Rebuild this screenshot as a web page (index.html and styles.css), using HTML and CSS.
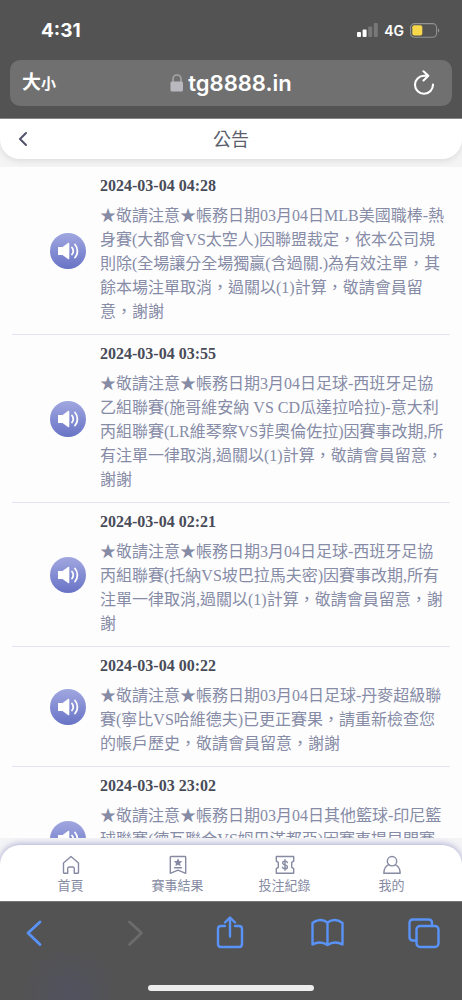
FILE: index.html
```html
<!DOCTYPE html>
<html lang="zh-Hant">
<head>
<meta charset="utf-8">
<meta name="viewport" content="width=device-width, initial-scale=1">
<title>公告</title>
<link rel="stylesheet" href="styles.css">
</head>
<body>
<svg class="defs" width="0" height="0" aria-hidden="true">
  <symbol id="speaker" viewBox="0 0 36 36">
    <path d="M8 14h4.500l5.500-4c.8-.5 1.300-.3 1.300.5v15c0 .8-.5 1-1.300.5L12.500 22H8z" fill="#fff"/>
    <path d="M22 14.500c1.500 2 1.500 5 0 7M25 11.500c3.200 3.700 3.200 9.300 0 13" fill="none" stroke="#fff" stroke-width="1.800" stroke-linecap="round"/>
  </symbol>
</svg>
<div class="phone">
  <div class="browser-top">
    <div class="status">
      <span class="clock">4:31</span>
      <div class="signals">
        <svg width="21" height="14" viewBox="0 0 21 14" aria-hidden="true"><rect x="0" y="9" width="4" height="5" rx="1" fill="#fff"/><rect x="5.600" y="6.500" width="4" height="7.500" rx="1" fill="#fff"/><rect x="11.200" y="3.500" width="4" height="10.500" rx="1" fill="#777"/><rect x="16.800" y="0" width="4" height="14" rx="1" fill="#777"/></svg>
        <span class="network">4G</span>
        <svg width="30" height="15" viewBox="0 0 30 15" aria-hidden="true"><rect x=".6" y=".6" width="26" height="13.600" rx="4" fill="none" stroke="#929292" stroke-width="1.100"/><rect x="2.300" y="2.300" width="10" height="10.200" rx="2" fill="#f8d84a"/><path d="M28 5.200c1.800.8 1.800 3.600 0 4.400z" fill="#929292"/></svg>
      </div>
    </div>
    <div class="address">
      <button class="text-size" type="button"><span class="big">大</span><span class="small">小</span></button>
      <div class="site">
        <svg width="14" height="18" viewBox="0 0 14 18" aria-hidden="true"><path d="M3 8V5a4 4 0 0 1 8 0v3" fill="none" stroke="#a5a5a9" stroke-width="1.600"/><rect x=".5" y="7.500" width="12.500" height="10" rx="1.500" fill="#b9b8bf"/></svg>
        <span>tg8888.in</span>
      </div>
      <button class="reload" type="button" aria-label="重新整理"><svg width="22" height="26" viewBox="0 0 22 26" aria-hidden="true"><path d="M14.500 5.800H11A9 9 0 1 0 20 14.500M10.500 1.300l4.800 4.500-4.800 4.700" fill="none" stroke="#fff" stroke-width="2.100" stroke-linecap="round" stroke-linejoin="round"/></svg></button>
    </div>
  </div>
  <header class="page-head">
    <div class="head-card">
      <button class="back" type="button" aria-label="返回"><svg width="10" height="16" viewBox="0 0 10 16" aria-hidden="true"><path d="M8 2L2 8l6 6" fill="none" stroke="#50546a" stroke-width="2" stroke-linecap="round" stroke-linejoin="round"/></svg></button>
      <h1>公告</h1>
    </div>
  </header>
  <main class="notices">
    <article class="notice">
      <span class="badge"><svg width="36" height="36"><use href="#speaker"/></svg></span>
      <div class="body"><h2>2024-03-04 04:28</h2><p>★敬請注意★帳務日期03月04日MLB美國職棒-熱身賽(大都會VS太空人)因聯盟裁定，依本公司規則除(全場讓分全場獨贏(含過關.)為有效注單，其餘本場注單取消，過關以(1)計算，敬請會員留意，謝謝</p></div>
    </article>
    <article class="notice">
      <span class="badge"><svg width="36" height="36"><use href="#speaker"/></svg></span>
      <div class="body"><h2>2024-03-04 03:55</h2><p>★敬請注意★帳務日期3月04日足球-西班牙足協乙組聯賽(施哥維安納 VS CD瓜達拉哈拉)-意大利丙組聯賽(LR維琴察VS菲奧倫佐拉)因賽事改期,所有注單一律取消,過關以(1)計算，敬請會員留意，謝謝</p></div>
    </article>
    <article class="notice">
      <span class="badge"><svg width="36" height="36"><use href="#speaker"/></svg></span>
      <div class="body"><h2>2024-03-04 02:21</h2><p>★敬請注意★帳務日期3月04日足球-西班牙足協丙組聯賽(托納VS坡巴拉馬夫密)因賽事改期,所有注單一律取消,過關以(1)計算，敬請會員留意，謝謝</p></div>
    </article>
    <article class="notice">
      <span class="badge"><svg width="36" height="36"><use href="#speaker"/></svg></span>
      <div class="body"><h2>2024-03-04 00:22</h2><p>★敬請注意★帳務日期03月04日足球-丹麥超級聯賽(寧比VS哈維德夫)已更正賽果，請重新檢查您的帳戶歷史，敬請會員留意，謝謝</p></div>
    </article>
    <article class="notice tall">
      <span class="badge"><svg width="36" height="36"><use href="#speaker"/></svg></span>
      <div class="body"><h2>2024-03-03 23:02</h2><p>★敬請注意★帳務日期03月04日其他籃球-印尼籃球聯賽(德瓦聯合VS姆巴滿都亞)因賽事提早開賽</p></div>
    </article>
  </main>
  <div class="tab-wrap">
    <nav class="tabs">
      <a href="#home"><svg width="20" height="20" viewBox="0 0 20 20" aria-hidden="true"><path d="M2.500 8L10 1.500 17.500 8v9.500q0 .8-.8.800h-3.400v-4.600q0-1.700-1.700-1.700H8.400q-1.700 0-1.700 1.700v4.600H3.300q-.8 0-.8-.8z"/></svg><span>首頁</span></a>
      <a href="#results"><svg width="20" height="20" viewBox="0 0 20 20" aria-hidden="true"><path d="M3 1.500h14q.7 0 .7.700v16.100L10 15.200l-7.700 3.100V2.200q0-.7.700-.7zM6.500 12.700h7"/><path class="solid" d="M10 3.300l1.300 2.600 2.900.4-2.100 2 .5 2.900-2.600-1.400-2.600 1.400.5-2.900-2.100-2 2.900-.4z"/></svg><span>賽事結果</span></a>
      <a href="#bets"><svg width="20" height="20" viewBox="0 0 20 20" aria-hidden="true"><path d="M1.300 1.500h17.400v4.700l-2 1.200v5l2 1.200v4.700H1.300v-4.700l2-1.200v-5l-2-1.200z"/><path d="M12.400 7.600c-.2-1-1.100-1.500-2.400-1.500-3 0-3.100 3.200 0 3.800 3.300.7 3.100 3.900 0 3.900-1.400 0-2.300-.5-2.500-1.700M10 4.600v10.700"/></svg><span>投注紀錄</span></a>
      <a href="#me"><svg width="20" height="20" viewBox="0 0 20 20" aria-hidden="true"><circle cx="10" cy="6.200" r="4.700"/><path d="M6.800 9.700c-3 1.300-5 4.300-5 8.600h16.400c0-4.300-2-7.300-5-8.600"/></svg><span>我的</span></a>
    </nav>
  </div>
  <div class="browser-bottom">
    <div class="tools">
      <button type="button" aria-label="上一頁"><svg width="34" height="34" viewBox="0 0 34 34"><path d="M23 6L11 17l12 11.500" stroke-width="2.800"/></svg></button>
      <button type="button" aria-label="下一頁" disabled><svg width="34" height="34" viewBox="0 0 34 34"><path d="M14.500 6l12 11-12 11.500" stroke-width="2.800"/></svg></button>
      <button type="button" aria-label="分享"><svg width="34" height="34" viewBox="0 0 34 34"><path d="M13 10H9Q6 10 6 13v15q0 3 3 3h18q3 0 3-3V13q0-3-3-3h-4M18 20.500V2M13 6.500l5-5 5 5"/></svg></button>
      <button type="button" aria-label="書籤"><svg width="34" height="34" viewBox="0 0 34 34"><path d="M17.500 6.500C13 3 7 3 2.500 7v21.500c4.500-2.500 10.500-2.500 15 .5 4.500-3 10.500-3 15-.5V7C28 3 22 3 17.500 6.500zM17.500 6.500V29"/></svg></button>
      <button type="button" aria-label="分頁"><svg width="34" height="34" viewBox="0 0 34 34"><rect x="9.500" y="10" width="22" height="21" rx="3.500"/><path d="M9.500 24.500H6q-3.500 0-3.500-3.500V7q0-3.500 3.500-3.500h15.500q3.500 0 3.500 3.500v3"/></svg></button>
    </div>
    <div class="home-bar"></div>
  </div>
</div>
</body>
</html>
```
FILE: styles.css
```css
* { box-sizing: border-box; }
body {
  margin: 0;
  background: #fdfdfe;
  font-family: "Liberation Serif", "Noto Sans CJK TC", serif;
}
button {
  padding: 0;
  border: 0;
  background: none;
  color: inherit;
  font: inherit;
}
svg { display: block; flex: none; }
.defs { position: absolute; }
.phone {
  display: flex;
  flex-direction: column;
  height: 100vh;
  overflow: hidden;
}
.browser-top {
  flex: none;
  padding: 0 10px 12px;
  background: #535353;
  border-bottom: 1px solid #8b8b8b;
  color: #fff;
  font-family: Inter, "Noto Sans CJK TC", sans-serif;
}
.status {
  display: flex;
  justify-content: space-between;
  align-items: center;
  height: 60px;
  padding: 0 12px 0 31px;
}
.clock { font-size: 19px; font-weight: 700; }
.signals { display: flex; align-items: center; gap: 6px; }
.network { font-size: 14px; font-weight: 600; }
.address {
  display: grid;
  grid-template-columns: 1fr auto 1fr;
  align-items: center;
  height: 46px;
  padding: 0 12px;
  border-radius: 10px;
  background: #707070;
}
.text-size { justify-self: start; font-weight: 700; line-height: 28px; }
.big { font-size: 19px; }
.small { font-size: 15px; }
.site {
  display: flex;
  align-items: center;
  gap: 4px;
  font-size: 22px;
  font-weight: 600;
}
.reload { justify-self: end; margin-right: 5px; }
.page-head {
  flex: none;
  height: 48px;
  background: #f4f4f5;
}
.head-card {
  display: grid;
  grid-template-columns: 1fr auto 1fr;
  align-items: center;
  height: 40px;
  padding: 0 18px;
  border-radius: 0 0 20px 20px;
  background: #fff;
  box-shadow: 0 2px 6px #0000001a;
}
.back { justify-self: start; }
h1 {
  margin: 0;
  padding-top: 2px;
  color: #5b5e6c;
  font-size: 18px;
  font-weight: 400;
  line-height: 38px;
}
.notices {
  flex: 1;
  min-height: 0;
  padding: 0 12px;
  overflow: hidden;
}
.notice {
  display: grid;
  grid-template-columns: 88px 1fr;
  align-items: center;
  padding: 8px 0 10px;
  border-bottom: 1px solid #e3e4f3;
}
.tall { min-height: 144px; }
.badge {
  width: 36px;
  height: 36px;
  margin: 2px 0 0 38px;
  border-radius: 50%;
  background: linear-gradient(#a0a7e0, #6873c5);
}
.body { align-self: start; padding-right: 2px; }
h2 {
  margin: 0 0 7px;
  color: #484b58;
  font-size: 16px;
  line-height: 22px;
}
p {
  margin: 0;
  color: #868ba6;
  font-size: 16px;
  line-height: 24px;
}
.tab-wrap {
  flex: none;
  padding-top: 7px;
  overflow: hidden;
  background: #f4f4f6;
}
.tabs {
  display: grid;
  grid-template-columns: repeat(4, 1fr);
  height: 56px;
  padding: 10px 17px 0;
  border-radius: 20px 20px 0 0;
  background: #fff;
  box-shadow: 0 -1px 6px #a9abd0;
}
.tabs a {
  display: flex;
  flex-direction: column;
  align-items: center;
  gap: 1px;
  color: #868ba3;
  font-size: 13px;
  line-height: 20px;
  text-decoration: none;
}
.tabs svg {
  fill: none;
  stroke: currentColor;
  stroke-width: 1.4;
  stroke-linejoin: round;
  stroke-linecap: round;
}
.tabs .solid { fill: currentColor; stroke: none; }
.browser-bottom {
  flex: none;
  height: 99px;
  padding-top: 14px;
  border-top: 1px solid #777;
  background: radial-gradient(circle at 70px 92px, #51525f, #535353 50px);
}
.tools {
  display: flex;
  justify-content: space-between;
  padding: 0 21px 0 17px;
  color: #5a93f8;
}
.tools svg {
  fill: none;
  stroke: currentColor;
  stroke-width: 2.4;
  stroke-linejoin: round;
  stroke-linecap: round;
}
.tools button:disabled { color: #6c6c6c; }
.home-bar {
  width: 36%;
  height: 6px;
  margin: 35px auto 0;
  border-radius: 3px;
  background: #ededed;
}
```
